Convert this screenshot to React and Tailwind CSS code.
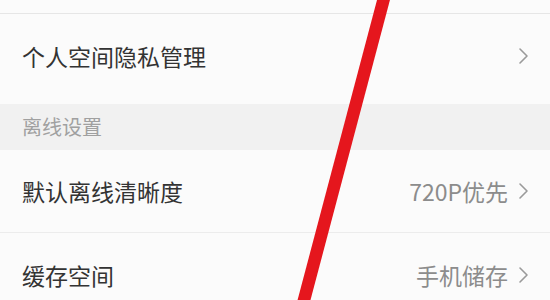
import React from "react";

const Chevron = () => (
  <svg width="11" height="18" viewBox="0 0 11 18" className="ml-[10px]" fill="none">
    <path d="M2 2 L9 9 L2 16" stroke="#9a9a9a" strokeWidth="1.6" strokeLinecap="round" strokeLinejoin="round" />
  </svg>
);

const Row = ({ label, value, h, border }) => (
  <div
    className={`flex items-center justify-between pl-[22px] pr-[21px] bg-[#fbfbfb] ${h} ${border ? "border-b border-[#ececec]" : ""}`}
  >
    <span className="text-[23px] leading-none text-[#333333]">{label}</span>
    <div className="flex items-center">
      {value && <span className="text-[23px] leading-none text-[#8c8c8c]">{value}</span>}
      <Chevron />
    </div>
  </div>
);

export default function App() {
  return (
    <div
      className="relative w-[550px] h-[300px] overflow-hidden bg-[#fbfbfb]"
      style={{ fontFamily: '"Noto Sans CJK SC", "Noto Sans", sans-serif' }}
    >
      <div className="h-[14px] bg-[#fbfbfb] border-b border-[#e6e6e6]" />
      <div className="flex items-center justify-between pl-[22px] pr-[21px] bg-[#fbfbfb] h-[90px] pb-[6px]">
        <span className="text-[23px] leading-none text-[#333333]">个人空间隐私管理</span>
        <Chevron />
      </div>
      <div className="h-[46px] bg-[#f1f1f1] flex items-center pl-[22px]">
        <span className="text-[20px] leading-none text-[#a0a0a0]">离线设置</span>
      </div>
      <Row label="默认离线清晰度" value="720P优先" h="h-[83px]" border />
      <Row label="缓存空间" value="手机储存" h="h-[84px]" />
      <svg className="absolute inset-0 pointer-events-none" width="550" height="300" viewBox="0 0 550 300">
        <line x1="384" y1="-2" x2="303.5" y2="302" stroke="#e5161d" strokeWidth="12.5" />
      </svg>
    </div>
  );
}
